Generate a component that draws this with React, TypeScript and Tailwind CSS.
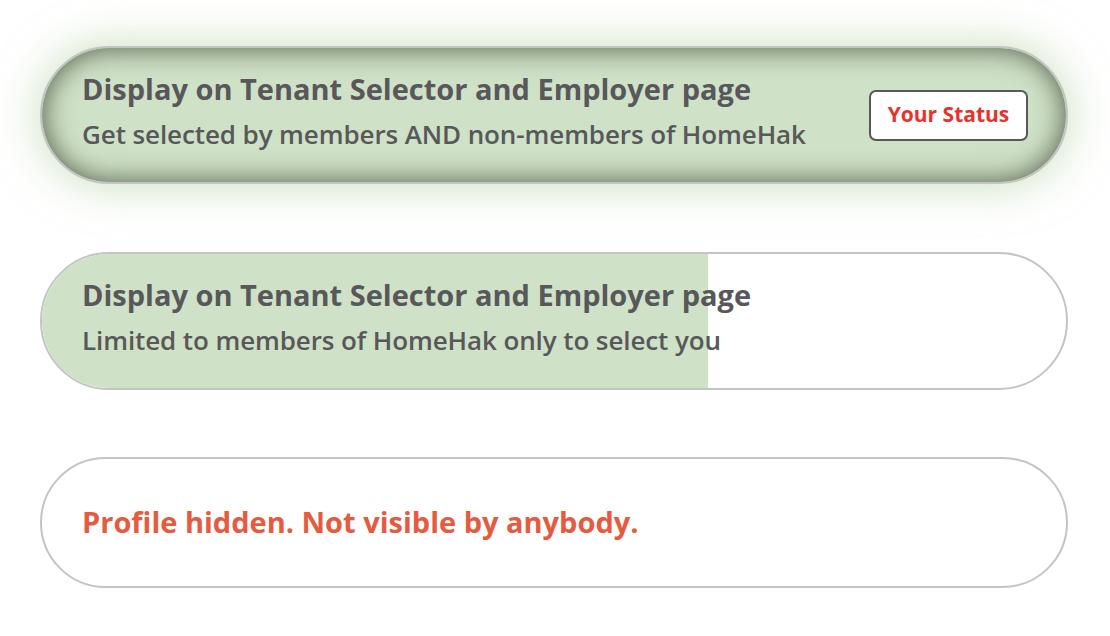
export default function App() {
  return (
    <div
      className="w-[1110px] h-[636px] bg-white flex flex-col pl-[40px] pr-[42px] pt-[46px] text-[#58585a]"
      style={{ fontFamily: "'Open Sans', Lato, sans-serif" }}
    >
      {/* Selected option */}
      <div className="h-[138px] rounded-full border-2 border-[#c4c4c4] bg-[#cfe1c7] shadow-[inset_0_0_28px_rgba(55,65,45,0.85),0_0_46px_rgba(160,200,140,0.6)] flex items-center justify-between pl-[40px] pr-[38px]">
        <div className="flex flex-col gap-[11px] mb-[9px]">
          <div className="text-[29px] font-bold leading-[36px]">Display on Tenant Selector and Employer page</div>
          <div className="text-[26px] font-semibold leading-[32px] tracking-[-0.1px]">Get selected by members AND non-members of HomeHak</div>
        </div>
        <button className="h-[51px] w-[159px] rounded-[7px] border-2 border-[#58585a] bg-white text-[21px] font-bold text-[#e8322a]">
          Your Status
        </button>
      </div>

      {/* Members only */}
      <div className="relative mt-[68px] h-[138px] rounded-full border-2 border-[#c4c4c4] bg-white overflow-hidden flex items-center pl-[40px]">
        <div className="absolute left-0 top-0 bottom-0 w-[666px] bg-[#cfe1c7]" />
        <div className="relative flex flex-col gap-[11px] mb-[9px]">
          <div className="text-[29px] font-bold leading-[36px]">Display on Tenant Selector and Employer page</div>
          <div className="text-[26px] font-semibold leading-[32px] tracking-[-0.1px]">Limited to members of HomeHak only to select you</div>
        </div>
      </div>

      {/* Hidden */}
      <div className="mt-[67px] h-[131px] rounded-full border-2 border-[#c4c4c4] bg-white flex items-center pl-[40px]">
        <div className="text-[29px] font-bold text-[#e55b40] mb-[2px]">Profile hidden. Not visible by anybody.</div>
      </div>
    </div>
  );
}
